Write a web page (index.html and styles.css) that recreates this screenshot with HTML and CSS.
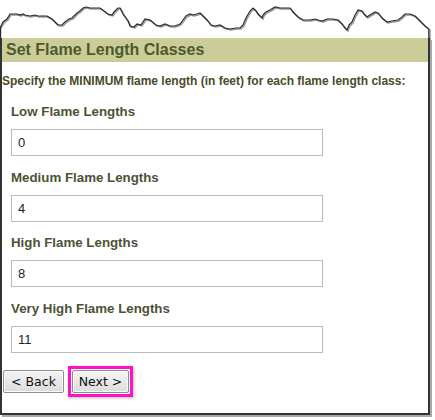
FILE: index.html
```html
<!DOCTYPE html>
<html>
<head>
<meta charset="utf-8">
<link rel="stylesheet" href="styles.css">
</head>
<body>
<div class="page">
  <svg class="torn" width="435" height="40" viewBox="0 0 435 40">
    <polyline fill="none" stroke="#999" stroke-width="1.5" transform="translate(1,1)" points="0,27 3,22 7,19 10,14 17,14 20,15 23,14 25,15 30,16 35,15 38,16 43,16 47,16 52,19 56,23 58,25 62,25 65,22 69,19 72,18 75,15 77,13 80,11 83,8 86,7 90,8 95,8 100,8 104,11 108,14 112,15 114,12 118,8 120,8 123,14 128,21 130,26 134,27 137,24 141,25 145,19 150,20 156,25 160,26 165,24 170,26 175,26 180,24 183,20 186,16 190,14 193,15 197,14 200,13 203,16 207,20 211,25 215,26 220,25 225,28 230,29 236,28 240,28 243,25 246,18 250,11 253,8 256,11 258,14 262,18 263,15 266,12 270,10 275,7 280,8 290,8 293,12 298,17 303,20 310,20 315,19 318,20 322,21 327,19 333,19 338,20 342,24 345,28 347,30 349,25 352,22 355,15 358,10 362,11 364,14 367,17 370,15 375,12 378,13 382,18 387,22 392,21 398,20 402,17 405,14 410,14 415,16 420,21 425,26 429,29 429,40"/>
    <polyline fill="none" stroke="#2a2a2a" stroke-width="1.2" points="0.6,40 0.6,27 3,22 7,19 10,14 17,14 20,15 23,14 25,15 30,16 35,15 38,16 43,16 47,16 52,19 56,23 58,25 62,25 65,22 69,19 72,18 75,15 77,13 80,11 83,8 86,7 90,8 95,8 100,8 104,11 108,14 112,15 114,12 118,8 120,8 123,14 128,21 130,26 134,27 137,24 141,25 145,19 150,20 156,25 160,26 165,24 170,26 175,26 180,24 183,20 186,16 190,14 193,15 197,14 200,13 203,16 207,20 211,25 215,26 220,25 225,28 230,29 236,28 240,28 243,25 246,18 250,11 253,8 256,11 258,14 262,18 263,15 266,12 270,10 275,7 280,8 290,8 293,12 298,17 303,20 310,20 315,19 318,20 322,21 327,19 333,19 338,20 342,24 345,28 347,30 349,25 352,22 355,15 358,10 362,11 364,14 367,17 370,15 375,12 378,13 382,18 387,22 392,21 398,20 402,17 405,14 410,14 415,16 420,21 425,26 428.8,29 428.8,40"/>
  </svg>
  <div class="box">
    <h1 class="title">Set Flame Length Classes</h1>
    <p class="intro">Specify the MINIMUM flame length (in feet) for each flame length class:</p>
    <div class="fields">
      <div class="field">
        <label class="label">Low Flame Lengths</label>
        <div class="input">0</div>
      </div>
      <div class="field">
        <label class="label">Medium Flame Lengths</label>
        <div class="input">4</div>
      </div>
      <div class="field">
        <label class="label">High Flame Lengths</label>
        <div class="input">8</div>
      </div>
      <div class="field">
        <label class="label">Very High Flame Lengths</label>
        <div class="input">11</div>
      </div>
    </div>
    <div class="buttons">
      <button class="btn btn-back">&lt; Back</button>
      <span class="highlight"><button class="btn btn-next">Next &gt;</button></span>
    </div>
  </div>
</div>
</body>
</html>
```
FILE: styles.css
```css
html, body {
  margin: 0;
  padding: 0;
  background: #fff;
}
.page {
  width: 435px;
  height: 420px;
  position: relative;
  font-family: "Liberation Sans", Arial, sans-serif;
}
.torn {
  display: block;
  position: absolute;
  left: 0;
  top: 0;
}
.box {
  position: absolute;
  left: 0;
  top: 38px;
  width: 426px;
  height: 375px;
  border-left: 2px solid #333;
  border-right: 2px solid #333;
  border-bottom: 2px solid #333;
  box-shadow: 2px 2px 0 #aaa;
  background: #fff;
}
.title {
  margin: 0;
  height: 24px;
  line-height: 24px;
  background: #cccc99;
  color: #4b5a2b;
  font-size: 16px;
  font-weight: bold;
  padding-left: 4px;
}
.intro {
  margin: 12px 0 0 0;
  color: #4a4a2a;
  font-size: 12px;
  font-weight: bold;
  line-height: 15px;
  height: 15px;
}
.fields {
  display: flex;
  flex-direction: column;
  gap: 13.67px;
  padding-left: 9px;
  margin-top: 15px;
}
.field {
  display: flex;
  flex-direction: column;
  gap: 9px;
}
.label {
  color: #4d5236;
  font-size: 13.3px;
  font-weight: bold;
  line-height: 16px;
  height: 16px;
}
.input {
  box-sizing: border-box;
  width: 312px;
  height: 27px;
  border: 1px solid #bbb;
  font-size: 13px;
  line-height: 25px;
  padding-left: 6px;
  color: #222;
}
.buttons {
  display: flex;
  align-items: center;
  gap: 4px;
  padding-left: 1px;
  margin-top: 13px;
}
.btn {
  box-sizing: border-box;
  height: 23px;
  padding: 0;
  white-space: nowrap;
  font-family: "DejaVu Sans", "Liberation Sans", sans-serif;
  font-size: 12.5px;
  color: #111;
  border: 1px solid #8e8e8e;
  border-radius: 2px;
  background: linear-gradient(#f4f4f4, #dcdcdc);
  box-shadow: inset 0 0 0 1px #fafafa;
}
.btn-back {
  width: 61px;
}
.highlight {
  display: inline-flex;
  border: 3px solid #ff11cc;
  padding: 1px;
  box-shadow: 1px 1px 3px #bbb;
}
.btn-next {
  width: 57px;
}
```
